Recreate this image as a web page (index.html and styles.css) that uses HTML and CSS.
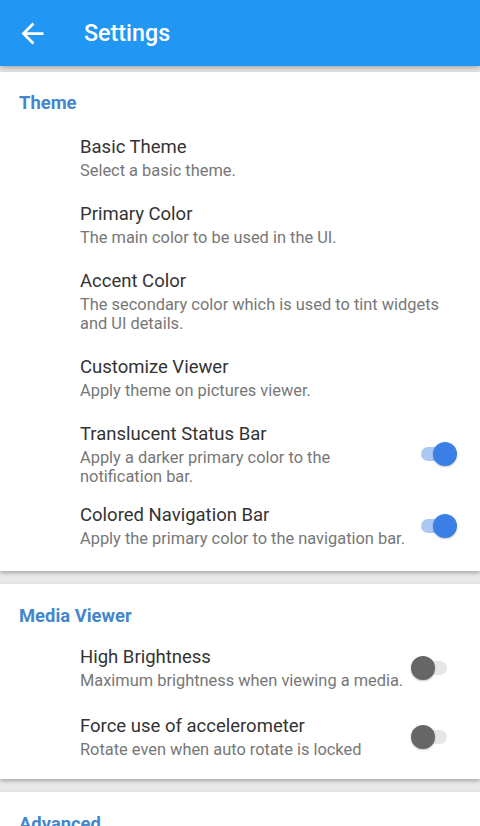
FILE: index.html
```html
<!DOCTYPE html>
<html>
<head>
<meta charset="utf-8">
<link rel="stylesheet" href="styles.css">
</head>
<body>
<header class="topbar">
  <svg class="back" viewBox="0 0 24 24" width="33" height="33"><path d="M20 11H7.83l5.59-5.59L12 4l-8 8 8 8 1.41-1.41L7.83 13H20v-2z" fill="#fff"/></svg>
  <h1 class="title">Settings</h1>
</header>
<main class="page">
  <section class="card card-first">
    <h2 class="section">Theme</h2>
    <div class="item">
      <div class="text"><div class="name">Basic Theme</div><div class="desc">Select a basic theme.</div></div>
    </div>
    <div class="item">
      <div class="text"><div class="name">Primary Color</div><div class="desc">The main color to be used in the UI.</div></div>
    </div>
    <div class="item">
      <div class="text"><div class="name">Accent Color</div><div class="desc">The secondary color which is used to tint widgets and UI details.</div></div>
    </div>
    <div class="item">
      <div class="text"><div class="name">Customize Viewer</div><div class="desc">Apply theme on pictures viewer.</div></div>
    </div>
    <div class="item item-tight">
      <div class="text"><div class="name">Translucent Status Bar</div><div class="desc">Apply a darker primary color to the notification bar.</div></div>
      <div class="switch on"><span class="track"></span><span class="thumb"></span></div>
    </div>
    <div class="item">
      <div class="text"><div class="name">Colored Navigation Bar</div><div class="desc">Apply the primary color to the navigation bar.</div></div>
      <div class="switch on"><span class="track"></span><span class="thumb"></span></div>
    </div>
  </section>
  <section class="card card-second">
    <h2 class="section">Media Viewer</h2>
    <div class="item item-tall">
      <div class="text"><div class="name">High Brightness</div><div class="desc">Maximum brightness when viewing a media.</div></div>
      <div class="switch"><span class="track"></span><span class="thumb"></span></div>
    </div>
    <div class="item item-tall">
      <div class="text"><div class="name">Force use of accelerometer</div><div class="desc">Rotate even when auto rotate is locked</div></div>
      <div class="switch"><span class="track"></span><span class="thumb"></span></div>
    </div>
  </section>
  <section class="card">
    <h2 class="section">Advanced</h2>
  </section>
</main>
</body>
</html>
```
FILE: styles.css
```css
* { box-sizing: border-box; }
html, body { margin: 0; padding: 0; }
body {
  width: 480px;
  height: 826px;
  overflow: hidden;
  background: #e9e9e9;
  font-family: Roboto, "Noto Sans", sans-serif;
}
.topbar {
  position: relative;
  z-index: 2;
  height: 66px;
  background: #2196f3;
  display: flex;
  align-items: center;
  padding-left: 16px;
  box-shadow: 0 2px 5px rgba(0, 0, 0, 0.28);
}
.back { display: block; margin-top: 1px; }
.title {
  margin: 0 0 0 35px;
  color: #fff;
  font-size: 23.3px;
  font-weight: 500;
  line-height: 30px;
}
.page { display: flex; flex-direction: column; gap: 13px; }
.card {
  background: #fff;
  padding: 20px 0 12px;
  box-shadow: 0 2px 4px rgba(0, 0, 0, 0.28);
}
.card-first { margin-top: 6px; padding-top: 19px; }
.card-second { padding-bottom: 7px; }
.section {
  margin: 0 0 9px;
  padding-left: 19px;
  font-size: 18.4px;
  font-weight: 700;
  line-height: 24px;
  color: #4486cc;
}
.card-second .section { margin-bottom: 6px; }
.item {
  display: flex;
  align-items: center;
  padding: 11px 23px 11px 80px;
}
.item-tight { padding-bottom: 6px; }
.item-tall { padding-top: 11px; padding-bottom: 13px; }
.text { flex: 1; min-width: 0; }
.name {
  font-size: 18.5px;
  line-height: 24px;
  color: #333;
}
.desc {
  margin-top: 2px;
  font-size: 16.4px;
  line-height: 19px;
  color: #777;
}
.switch {
  position: relative;
  flex: none;
  width: 46px;
  height: 24px;
}
.track {
  position: absolute;
  left: 10px;
  right: 10px;
  top: 5px;
  height: 14px;
  border-radius: 7px;
  background: #e6e6e6;
}
.thumb {
  position: absolute;
  left: 0;
  top: 0;
  width: 24px;
  height: 24px;
  border-radius: 50%;
  background: #666;
  box-shadow: 0 1px 2px rgba(0, 0, 0, 0.25);
}
.switch.on .track { background: #abc8f2; }
.switch.on .thumb { left: auto; right: 0; background: #3a7fe6; }
```
